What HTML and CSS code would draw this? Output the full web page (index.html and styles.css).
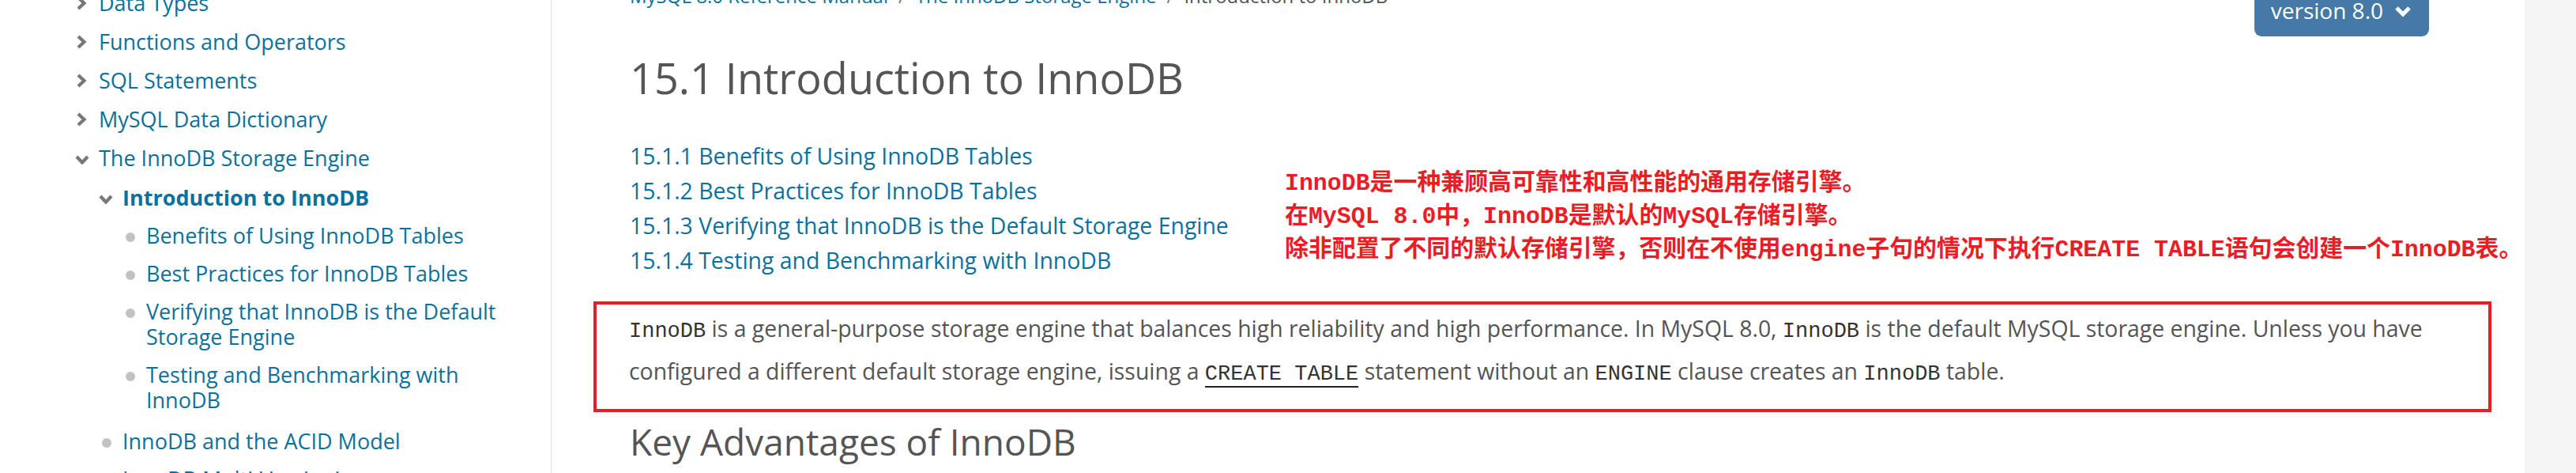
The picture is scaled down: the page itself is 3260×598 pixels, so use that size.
FILE: index.html
```html
<!DOCTYPE html>
<html lang="en">
<head>
<meta charset="utf-8">
<title>15.1 Introduction to InnoDB</title>
<link rel="stylesheet" href="styles.css">
</head>
<body>
<div class="page">
  <nav class="sidebar">
    <ul class="nav lvl1">
      <li><div class="row"><span class="ic"><svg class="chev-r" width="14" height="18" viewBox="0 0 14 18"><polyline points="3,2 10.5,9 3,16"/></svg></span><a href="#">Data Types</a></div></li>
      <li><div class="row"><span class="ic"><svg class="chev-r" width="14" height="18" viewBox="0 0 14 18"><polyline points="3,2 10.5,9 3,16"/></svg></span><a href="#">Functions and Operators</a></div></li>
      <li><div class="row"><span class="ic"><svg class="chev-r" width="14" height="18" viewBox="0 0 14 18"><polyline points="3,2 10.5,9 3,16"/></svg></span><a href="#">SQL Statements</a></div></li>
      <li><div class="row"><span class="ic"><svg class="chev-r" width="14" height="18" viewBox="0 0 14 18"><polyline points="3,2 10.5,9 3,16"/></svg></span><a href="#">MySQL Data Dictionary</a></div></li>
      <li><div class="row"><span class="ic"><svg class="chev-d" width="18" height="14" viewBox="0 0 18 14"><polyline points="2,3 9,10.5 16,3"/></svg></span><a href="#">The InnoDB Storage Engine</a></div>
        <ul class="nav lvl2">
          <li><div class="row"><span class="ic"><svg class="chev-d" width="18" height="14" viewBox="0 0 18 14"><polyline points="2,3 9,10.5 16,3"/></svg></span><a href="#" class="current">Introduction to InnoDB</a></div>
            <ul class="nav lvl3">
              <li><div class="row"><span class="ic"><span class="dot"></span></span><a href="#">Benefits of Using InnoDB Tables</a></div></li>
              <li><div class="row"><span class="ic"><span class="dot"></span></span><a href="#">Best Practices for InnoDB Tables</a></div></li>
              <li><div class="row"><span class="ic"><span class="dot"></span></span><a href="#">Verifying that InnoDB is the Default Storage Engine</a></div></li>
              <li><div class="row"><span class="ic"><span class="dot"></span></span><a href="#">Testing and Benchmarking with InnoDB</a></div></li>
            </ul>
          </li>
          <li><div class="row"><span class="ic"><span class="dot"></span></span><a href="#">InnoDB and the ACID Model</a></div></li>
          <li><div class="row"><span class="ic"><span class="dot"></span></span><a href="#">InnoDB Multi-Versioning</a></div></li>
        </ul>
      </li>
    </ul>
  </nav>

  <main class="main">
    <div class="topbar">
      <div class="crumbs"><a href="#">MySQL 8.0 Reference Manual</a><span class="sep">/</span><a href="#">The InnoDB Storage Engine</a><span class="sep">/</span><span class="here">Introduction to InnoDB</span></div>
      <button class="version">version 8.0<svg width="22" height="16" viewBox="0 0 22 16"><polyline points="3,4 11,12 19,4"/></svg></button>
    </div>

    <h1 class="title">15.1 Introduction to InnoDB</h1>

    <div class="toc-row">
      <ul class="toc">
        <li><a href="#">15.1.1 Benefits of Using InnoDB Tables</a></li>
        <li><a href="#">15.1.2 Best Practices for InnoDB Tables</a></li>
        <li><a href="#">15.1.3 Verifying that InnoDB is the Default Storage Engine</a></li>
        <li><a href="#">15.1.4 Testing and Benchmarking with InnoDB</a></li>
      </ul>
      <div class="note">
        <p>InnoDB是一种兼顾高可靠性和高性能的通用存储引擎。</p>
        <p>在MySQL 8.0中，InnoDB是默认的MySQL存储引擎。</p>
        <p>除非配置了不同的默认存储引擎，否则在不使用engine子句的情况下执行CREATE TABLE语句会创建一个InnoDB表。</p>
      </div>
    </div>

    <div class="marked">
      <p class="para"><code>InnoDB</code> is a general-purpose storage engine that balances high reliability and high performance. In MySQL 8.0, <code>InnoDB</code> is the default MySQL storage engine. Unless you have configured a different default storage engine, issuing a <a href="#" class="code-link"><code>CREATE TABLE</code></a> statement without an <code>ENGINE</code> clause creates an <code>InnoDB</code> table.</p>
    </div>

    <h2 class="sub">Key Advantages of InnoDB</h2>
  </main>

  <aside class="gutter"></aside>
</div>
</body>
</html>
```

FILE: styles.css
```css
html, body {
  margin: 0;
  padding: 0;
  background: #fff;
}
body {
  width: 3260px;
  height: 598px;
  overflow: hidden;
  font-family: "Open Sans", "Noto Sans", sans-serif;
  color: #555;
}
a {
  color: #0b719c;
  text-decoration: none;
}
ul {
  list-style: none;
  margin: 0;
  padding: 0;
}
p { margin: 0; }

.page {
  display: flex;
  height: 598px;
  overflow: hidden;
}

/* ---------- sidebar ---------- */
.sidebar {
  width: 698px;
  flex: none;
  border-right: 1px solid #e1e1e1;
  padding-right: 43px;
  box-sizing: border-box;
  overflow: hidden;
  font-size: 27px;
  line-height: 32px;
}
.lvl1 {
  padding-left: 95px;
  margin-top: -20.5px;
}
.lvl1 > li > .row { padding: 8.5px 0; }
.lvl2 { padding-left: 30px; margin-top: 1.5px; }
.lvl3 { padding-left: 30px; margin-bottom: 4px; }
.lvl2 .row { padding: 8px 0; }
.row {
  display: grid;
  grid-template-columns: 30px 1fr;
  align-items: start;
}
.ic {
  height: 32px;
  display: flex;
  align-items: center;
}
.ic svg { display: block; fill: none; stroke: #777; stroke-width: 4.2; stroke-linecap: butt; stroke-linejoin: miter; }
.chev-r { margin-left: 1px; }
.chev-d { margin-top: 4px; }
.dot {
  display: block;
  width: 12px;
  height: 12px;
  border-radius: 50%;
  background: #c2c2c2;
  margin-left: 4px;
  margin-top: 3px;
}
.current { font-weight: 700; }

/* ---------- main ---------- */
.main {
  flex: 1;
  min-width: 0;
  padding: 0 42px 0 99px;
}
.topbar {
  display: flex;
  justify-content: space-between;
  align-items: flex-start;
  margin-top: -21px;
}
.crumbs {
  font-size: 24px;
  line-height: 32px;
  color: #555;
}
.sep {
  color: #777;
  margin: 0 13px;
}
.version {
  margin: 9px 79px 0 0;
  height: 58px;
  box-sizing: border-box;
  padding: 9px 22px 17px 21px;
  border: 0;
  border-radius: 0 0 9px 9px;
  background: #4679a5;
  color: #fff;
  font-family: "Open Sans", sans-serif;
  font-size: 28px;
  line-height: 32px;
  display: flex;
  align-items: flex-start;
  gap: 14px;
}
.version svg {
  display: block;
  margin-top: 9px;
  fill: none;
  stroke: #fff;
  stroke-width: 5;
}

.title {
  margin: 20px 0 0;
  font-size: 54px;
  line-height: 64px;
  font-weight: 400;
  color: #555;
}

.toc-row {
  display: flex;
  align-items: flex-start;
  margin-top: 44.5px;
}
.toc {
  width: 829px;
  flex: none;
  font-size: 28.4px;
  line-height: 44px;
}
.note {
  margin-top: 36px;
  font-family: "Liberation Mono", "Noto Sans CJK SC", monospace;
  font-weight: 700;
  font-size: 29.9px;
  line-height: 42px;
  color: #ea1d25;
  white-space: nowrap;
}

.marked {
  margin: 30px 0 0 -46px;
  border: 4px solid #ea1d25;
  padding: 5px 40px 19px 41px;
}
.para {
  font-size: 28.4px;
  line-height: 50px;
  color: #555;
}
.para code {
  font-family: "Liberation Mono", monospace;
  font-size: 27px;
  color: #333;
}
.code-link {
  color: #222;
  border-bottom: 2px solid #222;
}

.sub {
  margin: 9px 0 0;
  font-size: 46px;
  line-height: 56px;
  font-weight: 400;
  color: #555;
}

.gutter {
  width: 65px;
  flex: none;
  background: #f5f5f5;
}
```
